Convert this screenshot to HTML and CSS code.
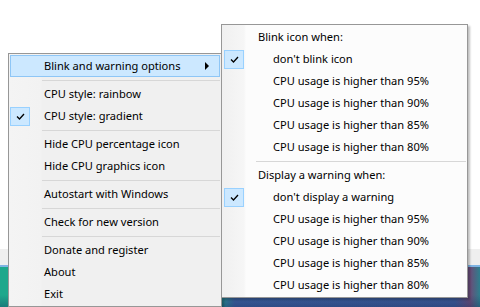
FILE: index.html
```html
<!DOCTYPE html>
<html>
<head>
  <title>CPU tray menu</title>
  <link rel="stylesheet" href="styles.css">
</head>
<body>
  <div class="desk">
    <div class="blank"></div>
    <div class="band"></div>
    <div class="bandline"></div>
    <div class="wall"></div>
  </div>

  <div class="menu main">
    <div class="item hot">
      <span class="gutter"></span>
      <span class="label">Blink and warning options</span>
      <span class="arrow"></span>
    </div>
    <div class="sep"></div>
    <div class="item"><span class="gutter"></span><span class="label">CPU style: rainbow</span></div>
    <div class="item">
      <span class="gutter"><span class="check"><svg width="9" height="7" viewBox="0 0 9 7"><path d="M1 3.5 L3.5 6 L8 1" fill="none" stroke="#000" stroke-width="1.3"/></svg></span></span>
      <span class="label">CPU style: gradient</span>
    </div>
    <div class="sep"></div>
    <div class="item"><span class="gutter"></span><span class="label">Hide CPU percentage icon</span></div>
    <div class="item"><span class="gutter"></span><span class="label">Hide CPU graphics icon</span></div>
    <div class="sep"></div>
    <div class="item"><span class="gutter"></span><span class="label">Autostart with Windows</span></div>
    <div class="sep"></div>
    <div class="item"><span class="gutter"></span><span class="label">Check for new version</span></div>
    <div class="sep"></div>
    <div class="item"><span class="gutter"></span><span class="label">Donate and register</span></div>
    <div class="item"><span class="gutter"></span><span class="label">About</span></div>
    <div class="item"><span class="gutter"></span><span class="label">Exit</span></div>
  </div>

  <div class="menu sub">
    <div class="item head"><span class="gutter"></span><span class="label">Blink icon when:</span></div>
    <div class="item">
      <span class="gutter"><span class="check"><svg width="9" height="7" viewBox="0 0 9 7"><path d="M1 3.5 L3.5 6 L8 1" fill="none" stroke="#000" stroke-width="1.3"/></svg></span></span>
      <span class="label">don't blink icon</span>
    </div>
    <div class="item"><span class="gutter"></span><span class="label">CPU usage is higher than 95%</span></div>
    <div class="item"><span class="gutter"></span><span class="label">CPU usage is higher than 90%</span></div>
    <div class="item"><span class="gutter"></span><span class="label">CPU usage is higher than 85%</span></div>
    <div class="item"><span class="gutter"></span><span class="label">CPU usage is higher than 80%</span></div>
    <div class="sep"></div>
    <div class="item head"><span class="gutter"></span><span class="label">Display a warning when:</span></div>
    <div class="item">
      <span class="gutter"><span class="check"><svg width="9" height="7" viewBox="0 0 9 7"><path d="M1 3.5 L3.5 6 L8 1" fill="none" stroke="#000" stroke-width="1.3"/></svg></span></span>
      <span class="label">don't display a warning</span>
    </div>
    <div class="item"><span class="gutter"></span><span class="label">CPU usage is higher than 95%</span></div>
    <div class="item"><span class="gutter"></span><span class="label">CPU usage is higher than 90%</span></div>
    <div class="item"><span class="gutter"></span><span class="label">CPU usage is higher than 85%</span></div>
    <div class="item"><span class="gutter"></span><span class="label">CPU usage is higher than 80%</span></div>
  </div>
</body>
</html>
```

FILE: styles.css
```css
html, body { margin: 0; padding: 0; }
body { width: 480px; height: 307px; overflow: hidden; position: relative; background: #fff; font-family: "Noto Sans", "Open Sans", sans-serif; font-size: 11.1px; color: #000; }

/* window and wallpaper behind the menus */
.desk { display: flex; flex-direction: column; height: 307px; }
.blank { height: 249px; background: #fff; }
.band { height: 16px; background: #efefef; }
.bandline { height: 2px; background: #7fb4e4; }
.wall { flex: 1; background: linear-gradient(180deg, rgba(0, 0, 0, 0) 70%, rgba(20, 40, 90, 0.35) 100%), linear-gradient(90deg, #1ea88c 0, #1ea88c 215px, #3b5f9e 235px, #3d5b98 455px, #6a4c78 470px, #2d7f8e 480px); }

/* context menus */
.menu { position: absolute; box-sizing: border-box; border: 1px solid #979797; box-shadow: 2px 2px 2px rgba(0, 0, 0, 0.25); }
.main { left: 8px; top: 53px; width: 214px; height: 254px; padding: 1px 1px 0 1px; background: linear-gradient(90deg, #f4f4f4 0, #f2f2f2 32px, #f0f0f0 33px); }
.sub { left: 221px; top: 24px; width: 247px; height: 274px; padding: 1px 1px 0 2px; background: linear-gradient(90deg, #f0f0f0 0, #f6f6f6 22px, #fcfcfc 24px); }

.item { display: flex; align-items: center; height: 22px; box-sizing: border-box; white-space: nowrap; }
.gutter { width: 34px; flex: none; display: flex; align-items: center; }
.sub .gutter { width: 49px; }
.sub .head .gutter { width: 34px; }
.label { flex: 1; padding-bottom: 2px; }
.check { display: flex; align-items: center; justify-content: center; width: 20px; height: 19px; box-sizing: border-box; background: #cce8ff; border: 1px solid #99d1ff; }

.hot { background: #cce8ff; border: 1px solid #8ec6f6; }
.hot .gutter { width: 33px; }
.arrow { width: 0; height: 0; border-top: 4px solid transparent; border-bottom: 4px solid transparent; border-left: 4px solid #000; margin-right: 10px; }

.sep { height: 6px; display: flex; align-items: center; padding-left: 32px; }
.sep::before { content: ""; flex: 1; height: 1px; background: #d7d7d7; }
```
